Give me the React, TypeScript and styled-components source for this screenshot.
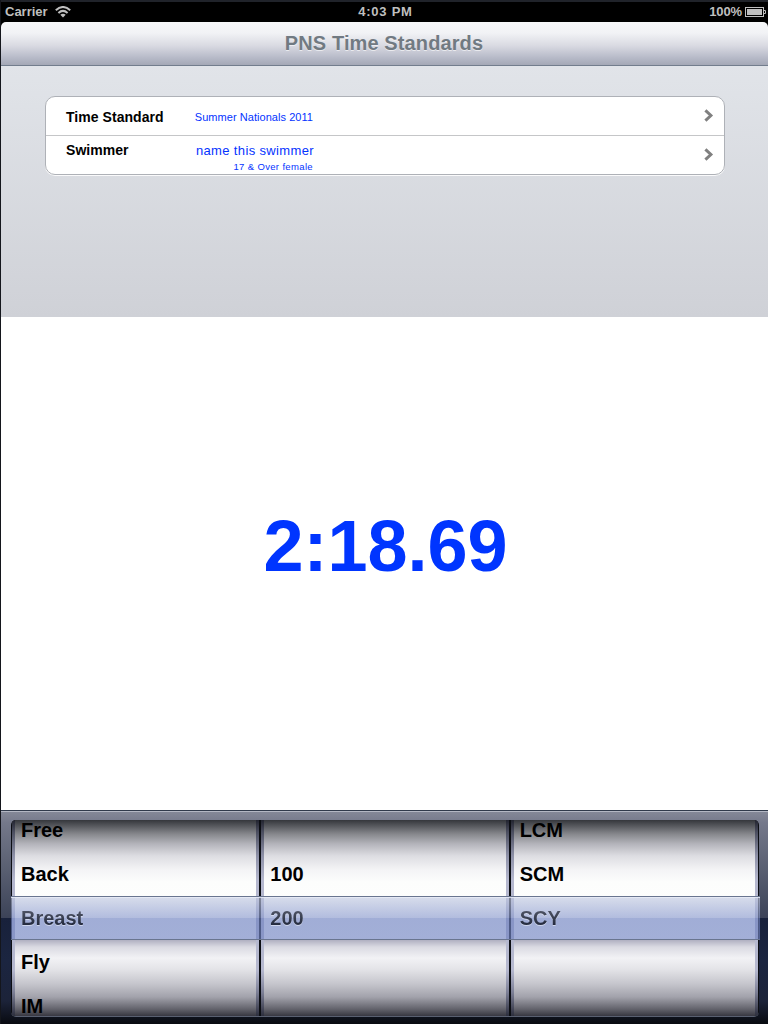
import React from "react";
import styled, { createGlobalStyle } from "styled-components";

const GlobalStyle = createGlobalStyle`
  * { box-sizing: border-box; }
  body {
    margin: 0;
    background: #fff;
    font-family: "Liberation Sans", Arial, Helvetica, sans-serif;
  }
`;

const Screen = styled.div`
  width: 768px;
  height: 1024px;
  display: flex;
  flex-direction: column;
  overflow: hidden;
  border-left: 1px solid #14161c;
  background: #fff;
`;

const StatusBar = styled.header`
  flex: none;
  height: 22px;
  display: grid;
  grid-template-columns: 1fr auto 1fr;
  align-items: center;
  padding: 0 2px 1px 4px;
  border-top: 2px solid #20232a;
  background: #000;
  color: #bfbfbf;
  font-size: 13px;
  line-height: 18px;
  font-weight: bold;
`;

const StatusGroup = styled.div<{ $end?: boolean }>`
  display: flex;
  align-items: center;
  justify-content: ${(p) => (p.$end ? "flex-end" : "flex-start")};
  gap: ${(p) => (p.$end ? 3 : 7)}px;
  letter-spacing: ${(p) => (p.$end ? -0.1 : 0)}px;
`;

const Clock = styled.span`
  letter-spacing: 0.75px;
`;

const NavBackdrop = styled.div`
  flex: none;
  height: 44px;
  background: #000;
`;

const NavBar = styled.div`
  height: 44px;
  border-radius: 5px 5px 0 0;
  border-bottom: 1px solid #727d8d;
  background: linear-gradient(#f7f8f9 0, #f1f2f5 26%, #d9dae2 55%, #b8bbc9 82%, #a4a8b6 100%);
  display: flex;
  justify-content: center;
`;

const Title = styled.h1`
  margin: 0;
  padding-right: 1px;
  font-size: 20px;
  line-height: 42px;
  letter-spacing: 0.11px;
  color: #717a82;
  text-shadow: 0 1px 0 rgba(255, 255, 255, 0.6);
`;

const Settings = styled.section`
  flex: none;
  height: 251px;
  padding: 30px 43px 0 44px;
  background: linear-gradient(#e1e4e9, #cfd1d7);
`;

const Group = styled.div`
  height: 79px;
  border: 1px solid #aeb1b7;
  border-radius: 10px;
  background: #fff;
  box-shadow: 0 1px 0 rgba(255, 255, 255, 0.85);
`;

const Row = styled.div`
  height: 39px;
  display: flex;
  padding: 0 10px 0 20px;

  & + & {
    height: 38px;
  }
  &:first-child {
    border-bottom: 1px solid #c5c6c8;
  }
`;

const Label = styled.div<{ $top: number }>`
  width: 127px;
  padding-top: ${(p) => p.$top}px;
  font-size: 14px;
  line-height: 16px;
  letter-spacing: 0.05px;
  font-weight: bold;
  color: #000;
`;

const Value = styled.div<{ $top: number }>`
  width: 121px;
  padding-top: ${(p) => p.$top}px;
  display: flex;
  flex-direction: column;
  align-items: flex-end;
  color: #0433ff;
  white-space: nowrap;
`;

const ValueText = styled.span<{ $size: number; $line: number; $spacing: number; $inset?: number }>`
  padding-right: ${(p) => p.$inset ?? 0}px;
  font-size: ${(p) => p.$size}px;
  line-height: ${(p) => p.$line}px;
  letter-spacing: ${(p) => p.$spacing}px;
`;

const Chevron = styled.svg`
  margin: 12px 0 0 auto;
`;

const TimeArea = styled.main`
  flex: none;
  height: 493px;
  padding: 188px 0 0 2px;
  text-align: center;
  color: #0035ff;
  font-size: 72px;
  line-height: 82px;
  font-weight: bold;
`;

const Picker = styled.section`
  position: relative;
  flex: none;
  height: 214px;
  padding: 9px 9px 7px 10px;
  border-top: 1px solid #303a4b;
  box-shadow: inset 0 1px 0 #b3b7c3;
  background: linear-gradient(#858998 0, #74788a 12px, #585e70 60px, #3c4358 107px, #18213b 107px, #1b2540 150px, #1c2339 190px, #080a10 213px);
`;

const Wheels = styled.div`
  height: 197px;
  display: flex;
  gap: 2px;
  padding: 0 1px;
  border-radius: 5px;
  background: #0c0e13;
  border-bottom: 1px solid #596071;
  overflow: hidden;
`;

const edge = `linear-gradient(#22242f 0, #4b4e5f 12px, #8e91a8 36px, #b5b8cf 60px, #b5b8cf 150px, #7d8096 172px, #2c2e3d 196px)`;

const Wheel = styled.div`
  flex: 1;
  overflow: hidden;
  padding-left: 9px;
  background:
    ${edge} left / 3px 100% no-repeat,
    ${edge} right / 3px 100% no-repeat,
    linear-gradient(
      #35373c 0, #515358 5px, #86878c 14px, #b4b4bb 24px, #dddde2 36px, #f4f4f6 50px,
      #fcfdfc 62px, #fff 119px, #b0b0c1 120px, #dadae2 127px, #f2f2f5 138px, #e4e4e8 149px,
      #c5c5cc 164px, #a2a2ab 177px, #63636c 189px, #373741 196px);
`;

const Option = styled.div<{ $selected?: boolean }>`
  position: relative;
  z-index: ${(p) => (p.$selected ? 2 : 0)};
  height: 44px;
  font-size: 20px;
  line-height: 44px;
  font-weight: bold;
  color: #000;

  &:first-child {
    margin-top: -12px;
  }
`;

const SelectedText = styled.span`
  display: inline-block;
  height: 44px;
  color: transparent;
  background: linear-gradient(#565b6b 12px, #3b4153 21px, #20273b 30px);
  background-clip: text;
  -webkit-background-clip: text;
  filter: drop-shadow(0 1px 0 rgba(225, 230, 245, 0.7));
`;

const Selection = styled.div`
  position: absolute;
  z-index: 1;
  left: 10px;
  right: 8px;
  top: 85px;
  height: 44px;
  border: solid #69758f;
  border-width: 1px 0;
  box-shadow: inset 0 1px 0 rgba(232, 236, 247, 0.8);
  background: linear-gradient(rgba(195, 203, 226, 0.65) 0, rgba(137, 153, 205, 0.65) 21px, rgba(111, 130, 193, 0.65) 21px, rgba(113, 132, 194, 0.65) 100%);
`;

const columns = [
  ["Free", "Back", "Breast", "Fly", "IM"],
  ["", "100", "200", "", ""],
  ["LCM", "SCM", "SCY", "", ""],
];
const selectedRow = 2;

function WifiIcon() {
  return (
    <svg width="16" height="12" viewBox="0 0 16 12" fill="none" stroke="#bfbfbf" strokeWidth="2">
      <path d="M.8 4.2Q8-2.2 15.2 4.2" />
      <path d="M3.4 7Q8 2.8 12.6 7" />
      <path d="M5.3 8.8Q8 6.5 10.7 8.8L8 11.6Z" fill="#bfbfbf" stroke="none" />
    </svg>
  );
}

function BatteryIcon() {
  return (
    <svg width="21" height="10" viewBox="0 0 21 10" fill="none">
      <rect x=".5" y=".5" width="18" height="9" stroke="#bfbfbf" />
      <rect x="2" y="2" width="15" height="6" fill="#bfbfbf" />
      <path d="M19 3.5h1.5v3H19" stroke="#bfbfbf" />
    </svg>
  );
}

function Disclosure() {
  return (
    <Chevron width="10" height="13" viewBox="0 0 10 13" fill="none">
      <path d="M1.4 1.3L6.9 6.5L1.4 11.7" stroke="#808080" strokeWidth="3" />
    </Chevron>
  );
}

export default function App() {
  return (
    <>
      <GlobalStyle />
      <Screen>
        <StatusBar>
          <StatusGroup>
            <span>Carrier</span>
            <WifiIcon />
          </StatusGroup>
          <Clock>4:03 PM</Clock>
          <StatusGroup $end>
            <span>100%</span>
            <BatteryIcon />
          </StatusGroup>
        </StatusBar>
        <NavBackdrop>
          <NavBar>
            <Title>PNS Time Standards</Title>
          </NavBar>
        </NavBackdrop>
        <Settings>
          <Group>
            <Row>
              <Label $top={12}>Time Standard</Label>
              <Value $top={13}>
                <ValueText $size={11} $line={14} $spacing={0.05} $inset={1}>
                  Summer Nationals 2011
                </ValueText>
              </Value>
              <Disclosure />
            </Row>
            <Row>
              <Label $top={6}>Swimmer</Label>
              <Value $top={7}>
                <ValueText $size={13} $line={16} $spacing={0.36}>
                  name this swimmer
                </ValueText>
                <ValueText $size={9.5} $line={16} $spacing={0.35} $inset={1}>
                  17 &amp; Over female
                </ValueText>
              </Value>
              <Disclosure />
            </Row>
          </Group>
        </Settings>
        <TimeArea>2:18.69</TimeArea>
        <Picker>
          <Wheels>
            {columns.map((options, i) => (
              <Wheel key={i}>
                {options.map((option, j) => (
                  <Option key={j} $selected={j === selectedRow}>
                    {j === selectedRow ? <SelectedText>{option}</SelectedText> : option}
                  </Option>
                ))}
              </Wheel>
            ))}
          </Wheels>
          <Selection />
        </Picker>
      </Screen>
    </>
  );
}
